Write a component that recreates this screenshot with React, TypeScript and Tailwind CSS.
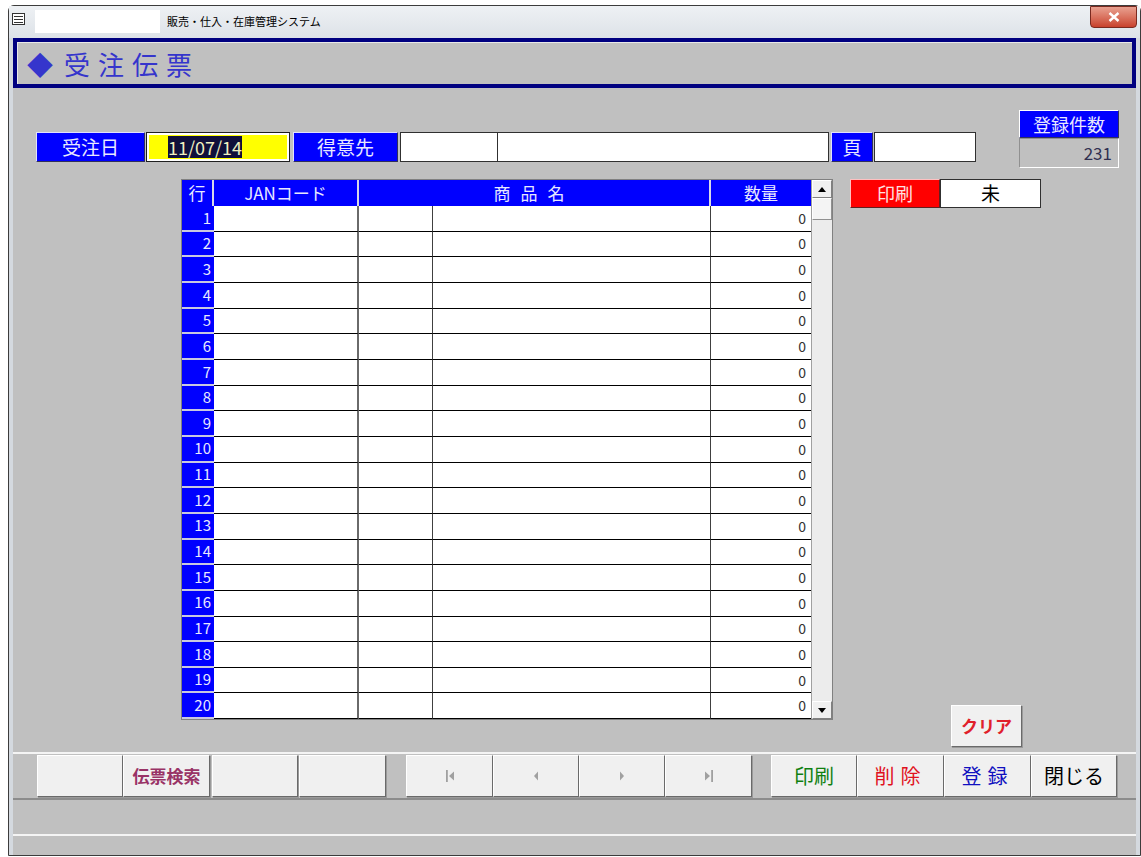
import React from "react";

const ROWS = Array.from({ length: 20 }, (_, i) => i + 1);

// raised 3D edge used by the blue labels and the push buttons
const LABEL =
  "flex items-center justify-center h-[30px] bg-[#0000ff] text-[#e8e8ff] text-[19px] border border-t-[#e0e0ff] border-l-[#e0e0ff] border-b-[#30305a] border-r-[#30305a]";
const BTN =
  "flex items-center justify-center h-[42px] bg-[#f0f0f0] border border-t-white border-l-white border-b-[#6a6a6a] border-r-[#6a6a6a] shadow-[1px_1px_0_#9a9a9a]";

function NavIcon({ kind }: { kind: "first" | "prev" | "next" | "last" }) {
  return (
    <svg width="12" height="14" viewBox="0 0 12 14" fill="#a0a0a0">
      {kind === "first" && (
        <>
          <rect x="2" y="1" width="1.8" height="12" />
          <path d="M10 2.5 L5 7 L10 11.5 Z" />
        </>
      )}
      {kind === "prev" && <path d="M8 2.5 L4 7 L8 11.5 Z" />}
      {kind === "next" && <path d="M4 2.5 L8 7 L4 11.5 Z" />}
      {kind === "last" && (
        <>
          <path d="M2 2.5 L7 7 L2 11.5 Z" />
          <rect x="8.2" y="1" width="1.8" height="12" />
        </>
      )}
    </svg>
  );
}

function TableRow({ n }: { n: number }) {
  return (
    <div className="flex min-h-0 flex-1">
      <div className="flex w-[32px] items-center justify-end bg-[#0000ff] border-b-2 border-b-[#c8c8e0] pr-[3px] text-[15px] text-[#e8e8ff]">
        {n}
      </div>
      <div className="w-[145px] bg-white border-b border-b-black border-r-2 border-r-[#6a6a6a]" />
      <div className="w-[74px] bg-white border-b border-b-black border-r border-r-[#404040]" />
      <div className="w-[278px] bg-white border-b border-b-black border-r border-r-[#404040]" />
      <div className="flex w-[100px] items-center justify-end bg-white border-b border-b-black pr-[5px] text-[14px] text-[#333]">
        0
      </div>
    </div>
  );
}

function OrderTable() {
  return (
    <div className="flex h-[541px] w-[652px] border border-[#808080] bg-[#c0c0c0]">
      <div className="flex w-[629px] flex-col overflow-hidden">
        <div className="flex h-[26px] shrink-0 text-[17px] text-[#e8e8ff]">
          <div className="flex w-[32px] items-center justify-center bg-[#0000ff] border-r-2 border-r-[#d8d8e8]">行</div>
          <div className="flex w-[145px] items-center justify-center bg-[#0000ff] border-r-2 border-r-[#d8d8e8]">JANコード</div>
          <div className="flex w-[352px] items-center justify-center bg-[#0000ff] border-r-2 border-r-[#d8d8e8] tracking-[10px]">商品名</div>
          <div className="flex w-[100px] items-center justify-center bg-[#0000ff]">数量</div>
        </div>
        <div className="flex h-[514px] flex-col">
          {ROWS.map((n) => (
            <TableRow key={n} n={n} />
          ))}
        </div>
      </div>
      <div className="flex w-[21px] flex-col bg-[#e6e6e6] border-l border-l-[#a0a0a0]">
        <div className="flex h-[18px] items-center justify-center bg-[#f0f0f0] border border-t-white border-l-white border-b-[#808080] border-r-[#808080]">
          <svg width="8" height="5" viewBox="0 0 8 5"><path d="M0 5 L4 0 L8 5 Z" fill="#000" /></svg>
        </div>
        <div className="h-[22px] bg-[#f4f4f4] border border-t-white border-l-white border-b-[#909090] border-r-[#909090]" />
        <div className="flex-1 bg-[#ececec]" />
        <div className="flex h-[18px] items-center justify-center bg-[#f0f0f0] border border-t-white border-l-white border-b-[#808080] border-r-[#808080]">
          <svg width="8" height="5" viewBox="0 0 8 5"><path d="M0 0 L8 0 L4 5 Z" fill="#000" /></svg>
        </div>
      </div>
    </div>
  );
}

export default function App() {
  return (
    <div className="h-[857px] w-[1141px] overflow-hidden bg-white pl-[8px] pt-[5px] font-['Noto_Sans_CJK_JP','Noto_Sans',sans-serif]">
      <div className="flex h-[851px] w-[1133px] flex-col rounded-t-[6px] border border-[#3c3c3c] bg-[#d4d9df]">
        {/* title bar */}
        <div className="flex h-[32px] shrink-0 items-start bg-gradient-to-b from-[#eef1f4] to-[#dde2e8] pl-[3px]">
          <div className="mt-[7px] flex h-[12px] w-[13px] flex-col justify-center gap-[2px] border border-[#333] bg-white px-[1px]">
            <div className="h-[1px] bg-[#333]" />
            <div className="h-[1px] bg-[#333]" />
            <div className="h-[1px] bg-[#333]" />
          </div>
          <div className="ml-[10px] mt-[4px] h-[23px] w-[125px] bg-white" />
          <div className="ml-[7px] mt-[8px] text-[11px] leading-[14px] text-black">販売・仕入・在庫管理システム</div>
          <div className="ml-auto mr-[3px] flex h-[22px] w-[47px] items-center justify-center rounded-b-[4px] border border-[#7a2a20] bg-gradient-to-b from-[#e8a090] to-[#c8402c]">
            <svg width="12" height="10" viewBox="0 0 12 10">
              <path d="M1.5 1 L10.5 9 M10.5 1 L1.5 9" stroke="#fff" strokeWidth="2.4" />
            </svg>
          </div>
        </div>

        <div className="mx-[4px] flex flex-1 flex-col bg-[#c0c0c0]">
          {/* form title band */}
          <div className="flex h-[50px] shrink-0 items-center border-[4px] border-[#000080] bg-[#c0c0c0] pl-[10px] text-[26px] tracking-[8px] text-[#3535cc] shadow-[inset_1px_1px_0_#e8e8e8]">
            <span className="mr-[3px]">◆</span>受注伝票
          </div>

          {/* main form */}
          <div className="flex h-[664px] shrink-0 flex-col">
            <div className="flex pl-[23px] pr-[17px] pt-[22px]">
              <div className="mt-[16px] flex items-center">
                <div className={`${LABEL} w-[109px]`}>受注日</div>
                <div className="ml-[1px] flex h-[30px] w-[144px] items-center border border-[#202020] bg-white p-[2px]">
                  <div className="flex h-full w-full items-center bg-[#ffff00] pl-[19px]">
                    <span className="bg-[#10103a] text-[18px] leading-[22px] text-[#f0f0c0]">11/07/14</span>
                  </div>
                </div>
                <div className={`${LABEL} ml-[3px] w-[105px]`}>得意先</div>
                <div className="ml-[2px] h-[30px] w-[98px] border border-[#303030] bg-white" />
                <div className="h-[30px] w-[331px] border border-l-0 border-[#303030] bg-white" />
                <div className={`${LABEL} ml-[2px] w-[42px]`}>頁</div>
                <div className="ml-[1px] h-[30px] w-[102px] border border-[#303030] bg-white" />
              </div>
              <div className="ml-auto flex w-[100px] flex-col">
                <div className="flex h-[28px] items-center justify-center border border-t-white border-l-white border-b-[#303060] border-r-[#303060] bg-[#0000ff] text-[18px] text-[#e8e8ff]">
                  登録件数
                </div>
                <div className="flex h-[30px] items-center justify-end border border-[#909090] border-b-white border-r-white bg-[#c0c0c0] pr-[6px] text-[17px] text-[#303050]">
                  231
                </div>
              </div>
            </div>

            <div className="mt-[11px] flex pl-[168px]">
              <OrderTable />
              <div className="ml-[17px] flex flex-col">
                <div className="flex">
                  <div className="flex h-[29px] w-[90px] items-center justify-center border border-t-[#ffc0c0] border-l-[#ffc0c0] border-b-[#602020] border-r-[#602020] bg-[#ff0000] text-[18px] text-[#ffe0e0]">
                    印刷
                  </div>
                  <div className="flex h-[29px] w-[101px] items-center justify-center border border-[#303030] bg-white text-[19px] text-black">
                    未
                  </div>
                </div>
                <div className={`${BTN} ml-[101px] mt-[497px] h-[34px] w-[71px] text-[17px] font-bold text-[#e0202a]`}>
                  クリア
                </div>
              </div>
            </div>
          </div>

          {/* command bar */}
          <div className="flex h-[48px] shrink-0 items-center border-t-2 border-t-[#f4f4f4] border-b-2 border-b-[#8c8c8c] pl-[24px]">
            <div className={`${BTN} w-[86px]`} />
            <div className={`${BTN} w-[87px] text-[17px] font-bold text-[#993366]`}>伝票検索</div>
            <div className={`${BTN} ml-[2px] w-[86px]`} />
            <div className={`${BTN} ml-[1px] w-[87px]`} />
            <div className={`${BTN} ml-[20px] w-[87px]`}>
              <NavIcon kind="first" />
            </div>
            <div className={`${BTN} w-[86px]`}>
              <NavIcon kind="prev" />
            </div>
            <div className={`${BTN} w-[86px]`}>
              <NavIcon kind="next" />
            </div>
            <div className={`${BTN} w-[87px]`}>
              <NavIcon kind="last" />
            </div>
            <div className={`${BTN} ml-[19px] w-[86px] text-[20px] text-[#108010]`}>印刷</div>
            <div className={`${BTN} w-[87px] text-[20px] tracking-[6px] text-[#e01020]`}>削除</div>
            <div className={`${BTN} w-[87px] text-[20px] tracking-[6px] text-[#1010c0]`}>登録</div>
            <div className={`${BTN} w-[86px] text-[20px] text-black`}>閉じる</div>
          </div>

          {/* status strip */}
          <div className="h-[36px] shrink-0 border-b-2 border-b-[#f4f4f4] bg-[#c0c0c0]" />
          <div className="flex-1 bg-[#c0c0c0]" />
        </div>
      </div>
    </div>
  );
}
